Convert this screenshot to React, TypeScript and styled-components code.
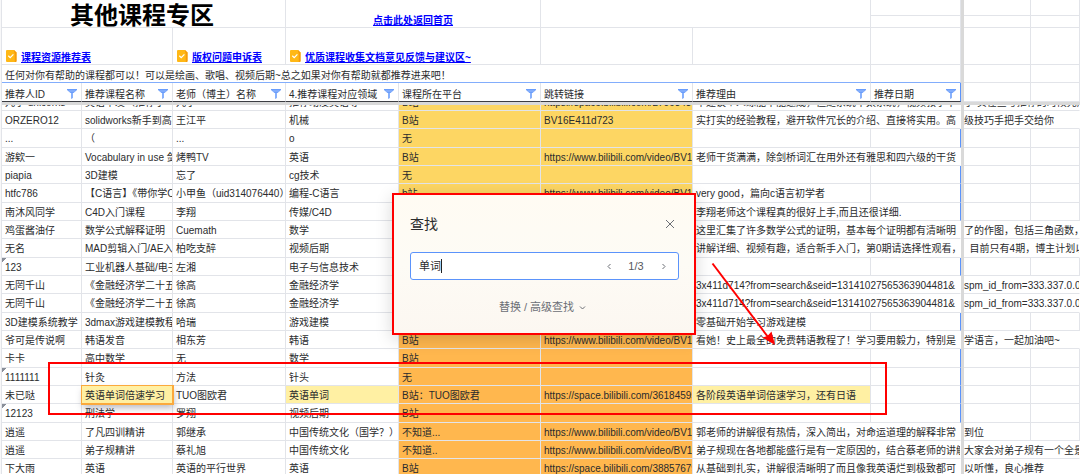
import React from 'react';
import styled, { createGlobalStyle, css } from 'styled-components';

const LINE = '#e2e4e9';
const BLUE = '#5b93fb';
const RED = '#ff0000';
const MARK = '#fff0a3';

const GlobalStyle = createGlobalStyle`
  * { box-sizing: border-box; }
  body {
    margin: 0;
    background: #fff;
    color: #2a2b2d;
    font: 10px/14px "Liberation Sans", "Noto Sans CJK SC", sans-serif;
  }
  button, input { font: inherit; color: inherit; }
`;

const Page = styled.main`
  position: relative;
  height: 100vh;
  overflow: hidden;
`;

const Sheet = styled.table`
  width: 100%;
  min-width: 1080px;
  table-layout: fixed;
  border-collapse: separate;
  border-spacing: 0;
`;

const Col = styled.col<{ $w?: number }>`
  ${p => p.$w && `width: ${p.$w}px;`}
`;

const Row = styled.tr<{ $h: number }>`
  height: ${p => p.$h}px;
`;

const DataRow = styled.tr`
  height: 18px;
  &:nth-child(3n) { height: 19px; }
`;

const cell = css`
  padding: 2px 0 0 3px;
  border-right: 1px solid ${LINE};
  border-bottom: 1px solid ${LINE};
  overflow: hidden;
  white-space: nowrap;
  text-align: left;
  vertical-align: middle;
  font-weight: 400;
`;

const footedCell = css`
  ${cell}
  vertical-align: bottom;
  line-height: 12px;
`;

type Fill = 'gold' | 'orange' | 'mark';
const fills: Record<Fill, string> = { gold: '#fdd663', orange: '#ffb74e', mark: MARK };

const Cell = styled.td<{ $fill?: Fill; $edge?: boolean; $flush?: boolean; $noted?: boolean; $bare?: boolean }>`
  ${cell}
  ${p => p.$fill && `background: ${fills[p.$fill]};`}
  ${p => p.$bare && 'border-right-color: transparent;'}
  ${p => p.$edge && `border-right-color: ${BLUE};`}
  ${p => p.$flush && 'padding-left: 0;'}
  ${p => p.$noted && 'background: linear-gradient(135deg, #8a8f99 3px, transparent 3px);'}
`;

const PeekCell = styled(Cell)`
  padding-top: 0;
`;

const Gutter = styled.td`
  padding: 0;
  background: #f8f8f9;
  border-right: 1px solid ${LINE};
`;

const Freeze = styled.td`
  padding: 0;
  background: #d9d9d9;
`;

const SelectedCell = styled.td`
  ${cell}
  position: relative;
  z-index: 1;
  background: ${MARK};
  border-color: #fba93c;
  box-shadow: 0 0 0 1px #fba93c, 1px 4px 7px rgba(60, 60, 80, 0.35);
`;

const TitleCell = styled.td`
  ${cell}
  padding: 2px 3px 0 0;
  text-align: center;
  vertical-align: bottom;
  h1 {
    margin: 0;
    color: #000;
    font-size: 24px;
    line-height: 22px;
    font-weight: 700;
  }
`;

const LinkCell = styled.td<{ $center?: boolean }>`
  ${footedCell}
  ${p => p.$center && 'padding-left: 0; text-align: center;'}
`;

const Link = styled.a`
  color: #0000ff;
  font-weight: 700;
  text-decoration: underline;
`;

const LinkLine = styled.div`
  display: flex;
  align-items: flex-end;
  gap: 4px;
`;

const NoteCell = styled.td`
  ${footedCell}
  border-bottom-color: #82adfc;
`;

const HeadCell = styled.th<{ $last?: boolean }>`
  ${footedCell}
  border-bottom-color: #3c3d42;
  ${p => p.$last && `border-right-color: ${BLUE};`}
`;

const HeadInner = styled.div`
  display: flex;
  align-items: flex-end;
  justify-content: space-between;
  padding-right: 4px;
`;

const Peek = styled.div`
  display: flex;
  align-items: flex-end;
  height: 5px;
  line-height: 15px;
  overflow: hidden;
`;

const CheckIcon = () => (
  <svg width="12" height="14" viewBox="0 0 12 14" aria-hidden="true">
    <path d="M1 1a1 1 0 0 1 1-1h7l2.500 2.500V11a1 1 0 0 1-1 1H2a1 1 0 0 1-1-1z" fill="#ffb816" />
    <path d="M9 0l2.500 2.500V11a1 1 0 0 1-1 1H9.800V2.500H9z" fill="#f59a0c" />
    <path d="M3.300 5.800l1.900 1.800 3.200-3.200" fill="none" stroke="#fff" strokeWidth="1.200" />
  </svg>
);

const FilterButton = styled.button`
  display: flex;
  padding: 0;
  border: 0;
  background: none;
`;

const Filter = ({ label }: { label: string }) => (
  <FilterButton type="button" aria-label={`筛选 ${label}`}>
    <svg width="10" height="13" viewBox="0 0 10 13" aria-hidden="true">
      <path d="M0 1h10v1L6.500 5H3.500L0 2z" fill="#6a9dfb" />
      <path d="M1.500 3h7" stroke="#b9d1fd" strokeWidth=".6" />
      <path d="M4.200 5h1.600v5L4.200 11z" fill="#6a9dfb" />
    </svg>
  </FilterButton>
);

const Dialog = styled.section`
  position: absolute;
  left: 392px;
  top: 193px;
  width: 304px;
  padding: 19px 15px 17px 16px;
  border: 2px solid ${RED};
  background: linear-gradient(#fffbf3, #fdfbf5 50%, #fcf7f1);
  box-shadow: 0 4px 16px rgba(0, 0, 0, 0.16);
  font-size: 11px;
  z-index: 2;
`;

const DialogHead = styled.header`
  display: flex;
  align-items: center;
  justify-content: space-between;
  h2 {
    margin: 0;
    font-size: 14px;
    line-height: 20px;
    font-weight: 400;
  }
`;

const IconButton = styled.button`
  display: flex;
  align-items: center;
  justify-content: center;
  width: 18px;
  height: 18px;
  padding: 0;
  border: 0;
  background: none;
  color: #6b6e75;
`;

const SearchField = styled.label`
  display: flex;
  align-items: center;
  height: 28px;
  margin-top: 18px;
  padding: 0 6px 0 8px;
  border: 1px solid #5b93fb;
  border-radius: 3px;
  background: #fff;
`;

const SearchInput = styled.input`
  width: 22px;
  padding: 0;
  border: 0;
  outline: 0;
  background: none;
`;

const Caret = styled.span`
  width: 1px;
  height: 14px;
  margin-right: auto;
  background: #222;
`;

const Count = styled.span`
  width: 36px;
  text-align: center;
  color: #55585e;
`;

const MoreButton = styled.button`
  display: flex;
  align-items: center;
  gap: 5px;
  margin: 19px auto 0;
  padding: 0 4px 0 0;
  border: 0;
  background: none;
  color: #6b6e75;
  line-height: 17px;
`;

const Chevron = ({ d }: { d: string }) => (
  <svg width="7" height="7" viewBox="0 0 7 7" fill="none" stroke="currentColor" aria-hidden="true">
    <path d={d} />
  </svg>
);

const Highlight = styled.div`
  position: absolute;
  left: 48px;
  top: 362px;
  width: 839px;
  height: 53px;
  border: 2px solid ${RED};
  z-index: 2;
  pointer-events: none;
`;

const Arrow = styled.svg`
  position: absolute;
  left: 710px;
  top: 260px;
  z-index: 3;
  pointer-events: none;
`;

type Rec = {
  c: [string, string, string, string, string, string];
  reason?: string;
  rest?: string;
  spill?: boolean;
  edge?: boolean;
  restSpill?: boolean;
  noted?: boolean;
  hit?: boolean;
};

const BV = 'https://www.bilibili.com/video/BV1';

const records: Rec[] = [
  { c: ['ORZERO12', 'solidworks新手到高手', '王江平', '机械', 'B站', 'BV16E411d723'], reason: '实打实的经验教程，避开软件冗长的介绍、直接将实用。高', rest: '级技巧手把手交给你', spill: true, restSpill: true },
  { c: ['...', '（', '...', 'o', '无', ''] },
  { c: ['游欸一', 'Vocabulary in use 剑桥', '烤鸭TV', '英语', 'B站', BV], reason: '老师干货满满，除剑桥词汇在用外还有雅思和四六级的干货', spill: true },
  { c: ['piapia', '3D建模', '忘了', 'cg技术', '无', ''] },
  { c: ['htfc786', '【C语言】《带你学C', '小甲鱼（uid314076440）', '编程-C语言', 'b站', BV], reason: 'very good，篇向c语言初学者' },
  { c: ['南沐风同学', 'C4D入门课程', '李翔', '传媒/C4D', '', ''], reason: '李翔老师这个课程真的很好上手,而且还很详细.', spill: true, edge: true },
  { c: ['鸡蛋酱油仔', '数学公式解释证明', 'Cuemath', '数学', '', ''], reason: '这里汇集了许多数学公式的证明，基本每个证明都有清晰明', rest: '了的作图，包括三角函数，', spill: true, restSpill: true },
  { c: ['无名', 'MAD剪辑入门/AE入门', '柏吃支醉', '视频后期', '', ''], reason: '讲解详细、视频有趣，适合新手入门，第0期请选择性观看，', rest: '\u00a0\u00a0目前只有4期，博主计划以', spill: true, restSpill: true },
  { c: ['123', '工业机器人基础/电子', '左湘', '电子与信息技术', '', ''], noted: true },
  { c: ['无罔千山', '《金融经济学二十五讲', '徐高', '金融经济学', '', ''], reason: '3x411d714?from=search&seid=13141027565363904481&', rest: 'spm_id_from=333.337.0.0', spill: true, restSpill: true },
  { c: ['无罔千山', '《金融经济学二十五讲', '徐高', '金融经济学', '', ''], reason: '3x411d714?from=search&seid=13141027565363904481&', rest: 'spm_id_from=333.337.0.0', spill: true, restSpill: true },
  { c: ['3D建模系统教学', '3dmax游戏建模教程', '哈瑞', '游戏建模', '', ''], reason: '零基础开始学习游戏建模' },
  { c: ['爷可是传说啊', '韩语发音', '相东芳', '韩语', 'B站', BV], reason: '看她！史上最全的免费韩语教程了！学习要用毅力，特别是', rest: '学语言，一起加油吧~', spill: true, restSpill: true },
  { c: ['卡卡', '高中数学', '无', '数学', 'B站', ''] },
  { c: ['1111111', '针灸', '方法', '针头', '无', ''], noted: true },
  { c: ['未已哒', '英语单词倍速学习', 'TUO图欧君', '英语单词', 'B站：TUO图欧君', 'https://space.bilibili.com/36184595'], reason: '各阶段英语单词倍速学习，还有日语', hit: true },
  { c: ['12123', '刑法学', '罗翔', '视频后期', 'B站', ''], noted: true },
  { c: ['逍遥', '了凡四训精讲', '郭继承', '中国传统文化（国学？）', '不知道...', BV], reason: '郭老师的讲解很有热情，深入简出，对命运道理的解释非常', rest: '到位', spill: true },
  { c: ['逍遥', '弟子规精讲', '蔡礼旭', '中国传统文化', '不知道..', BV], reason: '弟子规现在各地都能盛行是有一定原因的，结合蔡老师的讲解', rest: '大家会对弟子规有一个全景', spill: true, restSpill: true },
  { c: ['下大雨', '英语', '英语的平行世界', '英语', 'B站', 'https://space.bilibili.com/38857679'], reason: '从基础到扎实，讲解很清晰明了而且像我英语烂到极致都可', rest: '以听懂，良心推荐', spill: true, restSpill: true },
];

const widths = [2, 80, 91, 113, 113, 142, 152, 178, 90, 3, 67];
const headers = ['推荐人ID', '推荐课程名称', '老师（博主）名称', '4.推荐课程对应领域', '课程所在平台', '跳转链接', '推荐理由', '推荐日期'];
const peeks: [string, Fill?][] = [
  ['九小 unicorns'],
  ['英语单发（推荐小'],
  ['九小'],
  ['推荐动漫英语等'],
  ['B站', 'gold'],
  ['https://space.bilibili.com/27063436', 'gold'],
];

const RecordRow = ({ r, i }: { r: Rec; i: number }) => {
  const fill: Fill = i < 9 ? 'gold' : 'orange';
  return (
    <DataRow>
      <Gutter />
      <Cell $noted={r.noted}>{r.c[0]}</Cell>
      {r.hit ? <SelectedCell>{r.c[1]}</SelectedCell> : <Cell>{r.c[1]}</Cell>}
      <Cell>{r.c[2]}</Cell>
      <Cell $fill={r.hit ? 'mark' : undefined}>{r.c[3]}</Cell>
      <Cell $fill={fill}>{r.c[4]}</Cell>
      <Cell $fill={fill}>{r.c[5]}</Cell>
      {r.spill ? (
        <Cell colSpan={2} $bare $edge={r.edge}>{r.reason}</Cell>
      ) : (
        <>
          <Cell $fill={r.hit ? 'mark' : undefined}>{r.reason}</Cell>
          <Cell $edge />
        </>
      )}
      <Freeze />
      {r.restSpill ? (
        <Cell colSpan={2} $flush $bare>{r.rest}</Cell>
      ) : (
        <>
          <Cell $flush>{r.rest}</Cell>
          <Cell />
        </>
      )}
    </DataRow>
  );
};

export default function App() {
  return (
    <Page>
      <GlobalStyle />
      <Sheet>
        <colgroup>
          {widths.map((w, i) => <Col key={i} $w={w} />)}
          <Col />
        </colgroup>
        <thead>
          <Row $h={16}>
            <Gutter />
            <TitleCell colSpan={3} rowSpan={2}><h1>其他课程专区</h1></TitleCell>
            <LinkCell colSpan={2} rowSpan={2} $center><Link href="#home">点击此处返回首页</Link></LinkCell>
            <Cell colSpan={2} rowSpan={2} />
            <Cell /><Freeze /><Cell /><Cell />
          </Row>
          <Row $h={12}>
            <Gutter /><Cell /><Freeze /><Cell /><Cell />
          </Row>
          <Row $h={37}>
            <Gutter />
            <LinkCell colSpan={2}><LinkLine><CheckIcon /><Link href="#resources">课程资源推荐表</Link></LinkLine></LinkCell>
            <LinkCell><LinkLine><CheckIcon /><Link href="#appeal">版权问题申诉表</Link></LinkLine></LinkCell>
            <LinkCell colSpan={2}><LinkLine><CheckIcon /><Link href="#feedback">优质课程收集文档意见反馈与建议区~</Link></LinkLine></LinkCell>
            <Cell /><Cell /><Cell /><Freeze /><Cell /><Cell />
          </Row>
          <Row $h={18}>
            <Gutter />
            <NoteCell colSpan={7}>任何对你有帮助的课程都可以！可以是绘画、歌唱、视频后期~总之如果对你有帮助就都推荐进来吧！</NoteCell>
            <NoteCell /><Freeze /><Cell /><Cell />
          </Row>
          <Row $h={19}>
            <Gutter />
            {headers.map((h, i) => (
              <HeadCell key={h} scope="col" $last={i === 7}>
                <HeadInner>{h}<Filter label={h} /></HeadInner>
              </HeadCell>
            ))}
            <Freeze /><Cell /><Cell />
          </Row>
          <Row $h={3}>
            <Gutter /><Freeze colSpan={11} />
          </Row>
        </thead>
        <tbody>
          <Row $h={6}>
            <Gutter />
            {peeks.map(([t, f], i) => <PeekCell key={i} $fill={f}><Peek>{t}</Peek></PeekCell>)}
            <PeekCell colSpan={2} $bare><Peek>不建议个人练能不能速成，但是系统不太系统，视频教学不</Peek></PeekCell>
            <Freeze />
            <PeekCell colSpan={2} $flush $bare><Peek>了 实在查考推荐的时候先用</Peek></PeekCell>
          </Row>
          {records.map((r, i) => <RecordRow key={i} r={r} i={i} />)}
        </tbody>
      </Sheet>

      <Dialog role="dialog" aria-label="查找">
        <DialogHead>
          <h2>查找</h2>
          <IconButton type="button" aria-label="关闭">
            <svg width="10" height="10" viewBox="0 0 10 10" stroke="currentColor" aria-hidden="true">
              <path d="M1 1l8 8M9 1L1 9" />
            </svg>
          </IconButton>
        </DialogHead>
        <SearchField>
          <SearchInput aria-label="查找内容" defaultValue="单词" />
          <Caret />
          <IconButton type="button" aria-label="上一个"><Chevron d="M4.500 1L2 3.500 4.500 6" /></IconButton>
          <Count>1/3</Count>
          <IconButton type="button" aria-label="下一个"><Chevron d="M2.500 1L5 3.500 2.500 6" /></IconButton>
        </SearchField>
        <MoreButton type="button">替换 / 高级查找 <Chevron d="M1 2.500L3.500 5 6 2.500" /></MoreButton>
      </Dialog>

      <Highlight />
      <Arrow width="70" height="90" viewBox="0 0 70 90" aria-hidden="true">
        <path d="M2.500 3.500L58 77" stroke={RED} strokeWidth="2" />
        <path d="M65 85L52.500 77.500 57.500 76 61.500 71.500z" fill={RED} />
      </Arrow>
    </Page>
  );
}
